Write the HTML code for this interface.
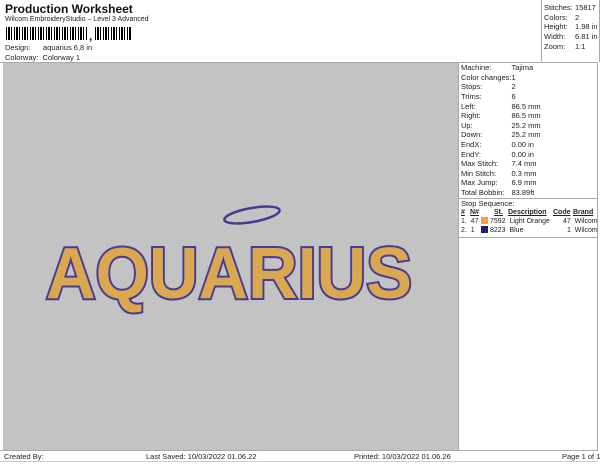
<!DOCTYPE html><html><head><style>
body{margin:0;width:600px;height:464px;background:#fff;font-family:"Liberation Sans",sans-serif;font-size:7.5px;color:#222;position:relative;overflow:hidden}
.a{position:absolute;white-space:nowrap}
.bc{position:absolute;top:27px;height:13px;background:repeating-linear-gradient(90deg,#000 0 1px,#fff 1px 2px,#000 2px 4px,#fff 4px 5px,#000 5px 6px,#fff 6px 8px)}
table{border-collapse:collapse}
td{padding:0;height:9.6px;font-size:7.5px}
</style></head><body>
<div class="a" style="left:5px;top:2px;font-size:12px;font-weight:bold;color:#111">Production Worksheet</div>
<div class="a" style="left:5px;top:16px;font-size:7px">Wilcom EmbroideryStudio – Level 3 Advanced</div>
<div class="bc" style="left:6px;width:82px"></div>
<div class="a" style="left:89px;top:29px;font-size:12px;font-weight:bold">,</div>
<div class="bc" style="left:95px;width:36px"></div>
<div class="a" style="left:5px;top:43px">Design:&nbsp;&nbsp;&nbsp;&nbsp;&nbsp; aquarius 6,8 in</div>
<div class="a" style="left:5px;top:53px">Colorway:&nbsp; Colorway 1</div>
<div class="a" style="left:0;top:62px;width:598px;border-top:1px solid #aaa"></div>
<div class="a" style="left:541px;top:0;width:57px;height:62px;border-left:1px solid #aaa;border-right:1px solid #aaa"></div>
<table class="a" style="left:544px;top:3px"><tr><td style="width:31px">Stitches:</td><td>15817</td></tr><tr><td>Colors:</td><td>2</td></tr><tr><td>Height:</td><td>1.98 in</td></tr><tr><td>Width:</td><td>6.81 in</td></tr><tr><td>Zoom:</td><td>1:1</td></tr></table>
<div class="a" style="left:3px;top:63px;width:455px;height:387px;background:#c3c3c3"></div>
<div class="a" style="left:458px;top:63px;width:140px;height:387px;border-left:1px solid #aaa;border-right:1px solid #aaa;box-sizing:border-box"></div>
<table class="a" style="left:461px;top:63px"><tr><td style="width:50px">Machine:</td><td>Tajima</td></tr><tr><td>Color changes:</td><td>1</td></tr><tr><td>Stops:</td><td>2</td></tr><tr><td>Trims:</td><td>6</td></tr><tr><td>Left:</td><td>86.5 mm</td></tr><tr><td>Right:</td><td>86.5 mm</td></tr><tr><td>Up:</td><td>25.2 mm</td></tr><tr><td>Down:</td><td>25.2 mm</td></tr><tr><td>EndX:</td><td>0.00 in</td></tr><tr><td>EndY:</td><td>0.00 in</td></tr><tr><td>Max Stitch:</td><td>7.4 mm</td></tr><tr><td>Min Stitch:</td><td>0.3 mm</td></tr><tr><td>Max Jump:</td><td>6.9 mm</td></tr><tr><td>Total Bobbin:</td><td>83.89ft</td></tr></table>
<div class="a" style="left:459px;top:198px;width:139px;border-top:1px solid #aaa"></div>
<div class="a" style="left:461px;top:199px">Stop Sequence:</div>
<div class="a" style="left:459px;top:237px;width:139px;border-top:1px solid #aaa"></div>
<div style="position:absolute;left:0;top:0;font-size:7px">
<div class="a" style="left:461px;top:209px;font-weight:bold;text-decoration:underline">#</div>
<div class="a" style="left:470px;top:209px;font-weight:bold;text-decoration:underline">N#</div>
<div class="a" style="left:494px;top:209px;font-weight:bold;text-decoration:underline">St.</div>
<div class="a" style="left:508px;top:209px;font-weight:bold;text-decoration:underline">Description</div>
<div class="a" style="left:553px;top:209px;font-weight:bold;text-decoration:underline">Code</div>
<div class="a" style="left:573px;top:209px;font-weight:bold;text-decoration:underline">Brand</div>
<div class="a" style="left:461px;top:218px">1.&nbsp; 47</div>
<div class="a" style="left:481px;top:217px;width:7px;height:7px;background:#f0a050"></div>
<div class="a" style="left:490px;top:218px">7592&nbsp; Light Orange</div>
<div class="a" style="left:563px;top:218px">47&nbsp; Wilcom</div>
<div class="a" style="left:461px;top:227px">2.&nbsp; 1</div>
<div class="a" style="left:481px;top:226px;width:7px;height:7px;background:#202070"></div>
<div class="a" style="left:490px;top:227px">8223&nbsp; Blue</div>
<div class="a" style="left:567px;top:227px">1&nbsp; Wilcom</div>
</div>
<svg class="a" style="left:0;top:0" width="600" height="464">
<ellipse cx="252" cy="215" rx="28" ry="7" fill="none" stroke="#4a3a90" stroke-width="2.5" transform="rotate(-10 252 215)"/>
<text x="46" y="298" font-family="Liberation Sans" font-weight="bold" font-size="72" textLength="366" lengthAdjust="spacingAndGlyphs" fill="#d9a850" stroke="#4a3a90" stroke-width="4" paint-order="stroke">AQUARIUS</text>
</svg>
<div class="a" style="left:0;top:450px;width:598px;border-top:1px solid #aaa"></div>
<div class="a" style="left:0;top:461px;width:598px;border-top:1px solid #ccc"></div>
<div class="a" style="left:4px;top:452px">Created By:</div>
<div class="a" style="left:146px;top:452px">Last Saved: 10/03/2022 01.06.22</div>
<div class="a" style="left:354px;top:452px">Printed: 10/03/2022 01.06.26</div>
<div class="a" style="left:562px;top:452px">Page 1 of 1</div>
</body></html>
